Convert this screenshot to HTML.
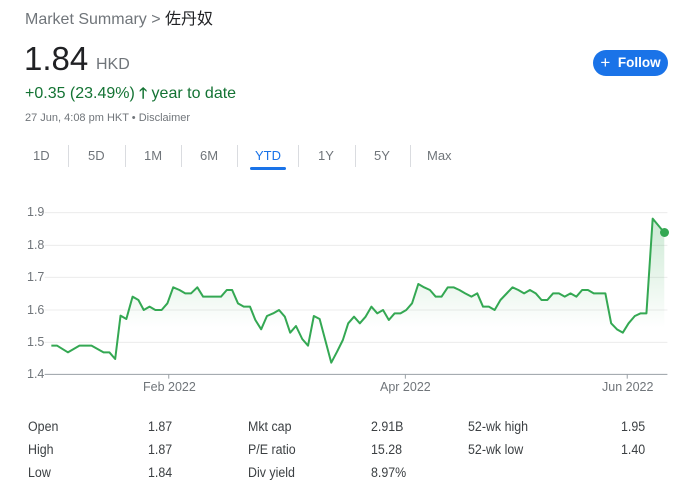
<!DOCTYPE html>
<html><head><meta charset="utf-8"><style>
body{margin:0;width:700px;height:490px;background:#fff;font-family:"Liberation Sans","Noto Sans CJK SC",sans-serif;position:relative;overflow:hidden}
.a{position:absolute;white-space:nowrap}
.t{font-size:13px;color:#70757a;top:148px}
.sep{position:absolute;top:145px;width:1px;height:22px;background:#dadce0}
.s{font-size:13.5px;color:#3c4043;position:absolute;white-space:nowrap;transform:scaleX(.92);transform-origin:left}
.g{font-size:12.5px;color:#70757a;position:absolute}
</style></head><body>
<div class="a" style="left:25px;top:5px;font-size:16px;color:#70757a">Market Summary &gt; <span style="color:#202124">佐丹奴</span></div>
<div class="a" style="left:24px;top:40px;font-size:33px;color:#202124">1.84</div>
<div class="a" style="left:96px;top:56px;font-size:16px;color:#70757a">HKD</div>
<div class="a" style="left:25px;top:83px;font-size:16px;color:#137333">+0.35 (23.49%) <b style="font-size:15px">🡑</b> year to date</div>
<div class="a" style="left:25px;top:112px;font-size:11px;color:#70757a">27 Jun, 4:08 pm HKT • Disclaimer</div>
<div class="a" style="left:593px;top:50px;width:75px;height:26px;border-radius:13px;background:#1a73e8;color:#fff;font-size:13.5px;font-weight:bold;line-height:26px;text-align:center"><span style="font-size:17px;font-weight:normal;vertical-align:-1px">+</span>&nbsp; Follow</div>
<div class="a t" style="left:33px">1D</div><div class="sep" style="left:68px"></div>
<div class="a t" style="left:88px">5D</div><div class="sep" style="left:125px"></div>
<div class="a t" style="left:144px">1M</div><div class="sep" style="left:181px"></div>
<div class="a t" style="left:200px">6M</div><div class="sep" style="left:237px"></div>
<div class="a t" style="left:255px;color:#1a73e8">YTD</div><div class="sep" style="left:298px"></div>
<div class="a" style="left:250px;top:167px;width:36px;height:3px;border-radius:2px;background:#1a73e8"></div>
<div class="a t" style="left:318px">1Y</div><div class="sep" style="left:355px"></div>
<div class="a t" style="left:374px">5Y</div><div class="sep" style="left:410px"></div>
<div class="a t" style="left:427px">Max</div>
<div class="g" style="left:27px;top:205px">1.9</div>
<div class="g" style="left:27px;top:238px">1.8</div>
<div class="g" style="left:27px;top:270px">1.7</div>
<div class="g" style="left:27px;top:303px">1.6</div>
<div class="g" style="left:27px;top:335px">1.5</div>
<div class="g" style="left:27px;top:367px">1.4</div>
<svg class="a" style="left:0;top:190px" width="700" height="210" viewBox="0 0 1568 630" preserveAspectRatio="none">
<defs><linearGradient id="f" x1="0" y1="0" x2="0" y2="1"><stop offset="0" stop-color="#34a853" stop-opacity=".25"/><stop offset=".7" stop-color="#34a853" stop-opacity="0"/></linearGradient></defs>
<g stroke="#ececec" stroke-width="1">
<line x1="100" x2="1495" y1="68" y2="68" vector-effect="non-scaling-stroke"/><line x1="100" x2="1495" y1="166" y2="166" vector-effect="non-scaling-stroke"/><line x1="100" x2="1495" y1="262" y2="262" vector-effect="non-scaling-stroke"/><line x1="100" x2="1495" y1="360" y2="360" vector-effect="non-scaling-stroke"/><line x1="100" x2="1495" y1="457" y2="457" vector-effect="non-scaling-stroke"/></g>
<path d="M115,467 128,467 152,487 178,467 205,467 232,487 245,487 258,507 270,377 283,387 297,320 310,330 322,360 335,350 348,360 362,360 375,340 388,292 402,300 415,310 428,310 442,292 455,320 468,320 495,320 508,300 520,300 533,340 546,350 560,350 572,390 585,418 598,378 612,370 625,360 638,380 650,428 663,408 677,447 690,467 703,378 716,387 742,518 755,485 768,450 780,400 793,380 806,400 819,380 832,350 845,370 858,360 871,390 884,370 897,370 910,360 923,340 937,282 950,292 963,300 976,320 989,320 1003,292 1016,292 1029,300 1042,310 1056,320 1069,310 1082,350 1095,350 1108,360 1121,330 1148,292 1161,300 1174,310 1187,300 1200,310 1213,330 1226,330 1239,310 1252,310 1265,320 1278,310 1291,320 1304,300 1317,300 1330,310 1356,310 1369,400 1382,418 1395,428 1408,400 1422,378 1435,370 1448,370 1462,86 1488,128 L1488,553 115,553Z" fill="url(#f)"/>
<path d="M115,467 128,467 152,487 178,467 205,467 232,487 245,487 258,507 270,377 283,387 297,320 310,330 322,360 335,350 348,360 362,360 375,340 388,292 402,300 415,310 428,310 442,292 455,320 468,320 495,320 508,300 520,300 533,340 546,350 560,350 572,390 585,418 598,378 612,370 625,360 638,380 650,428 663,408 677,447 690,467 703,378 716,387 742,518 755,485 768,450 780,400 793,380 806,400 819,380 832,350 845,370 858,360 871,390 884,370 897,370 910,360 923,340 937,282 950,292 963,300 976,320 989,320 1003,292 1016,292 1029,300 1042,310 1056,320 1069,310 1082,350 1095,350 1108,360 1121,330 1148,292 1161,300 1174,310 1187,300 1200,310 1213,330 1226,330 1239,310 1252,310 1265,320 1278,310 1291,320 1304,300 1317,300 1330,310 1356,310 1369,400 1382,418 1395,428 1408,400 1422,378 1435,370 1448,370 1462,86 1488,128" fill="none" stroke="#34a853" stroke-width="2" vector-effect="non-scaling-stroke" stroke-linejoin="round"/>
<line x1="100" x2="1495" y1="553" y2="553" stroke="#9aa0a6" stroke-width="1" vector-effect="non-scaling-stroke"/>
<g stroke="#9aa0a6"><line x1="378" x2="378" y1="553" y2="566" vector-effect="non-scaling-stroke"/><line x1="908" x2="908" y1="553" y2="566" vector-effect="non-scaling-stroke"/><line x1="1405" x2="1405" y1="553" y2="566" vector-effect="non-scaling-stroke"/></g>
</svg>
<div class="a" style="left:660px;top:228px;width:9px;height:9px;border-radius:50%;background:#34a853"></div>
<div class="g" style="left:143px;top:380px">Feb 2022</div>
<div class="g" style="left:380px;top:380px">Apr 2022</div>
<div class="g" style="left:602px;top:380px">Jun 2022</div>
<div class="s" style="left:28px;top:419px">Open</div><div class="s" style="left:148px;top:419px">1.87</div>
<div class="s" style="left:28px;top:442px">High</div><div class="s" style="left:148px;top:442px">1.87</div>
<div class="s" style="left:28px;top:465px">Low</div><div class="s" style="left:148px;top:465px">1.84</div>
<div class="s" style="left:248px;top:419px">Mkt cap</div><div class="s" style="left:371px;top:419px">2.91B</div>
<div class="s" style="left:248px;top:442px">P/E ratio</div><div class="s" style="left:371px;top:442px">15.28</div>
<div class="s" style="left:248px;top:465px">Div yield</div><div class="s" style="left:371px;top:465px">8.97%</div>
<div class="s" style="left:468px;top:419px">52-wk high</div><div class="s" style="left:621px;top:419px">1.95</div>
<div class="s" style="left:468px;top:442px">52-wk low</div><div class="s" style="left:621px;top:442px">1.40</div>
</body></html>
